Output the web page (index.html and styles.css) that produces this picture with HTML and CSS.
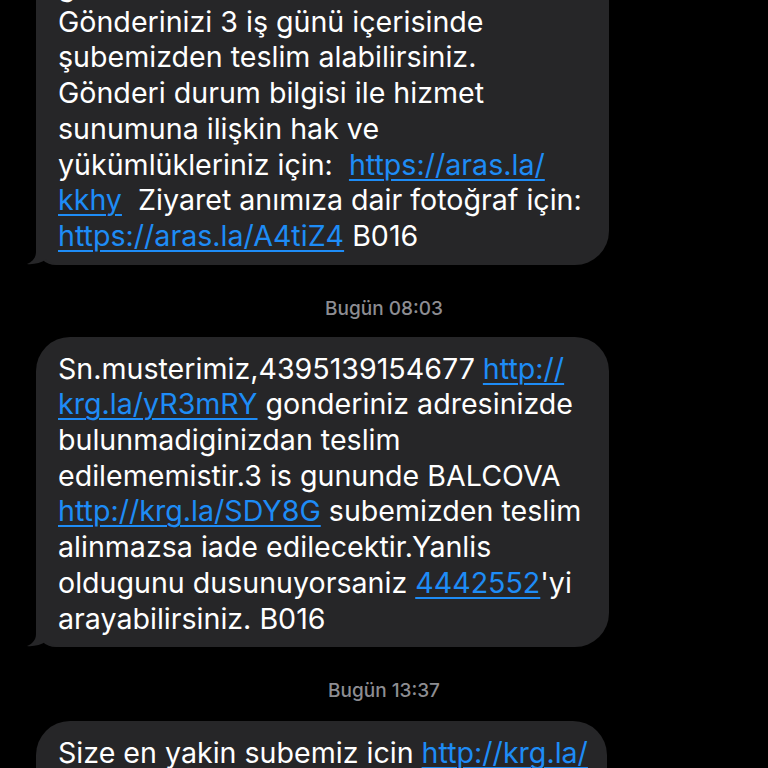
FILE: index.html
```html
<!DOCTYPE html>
<html lang="tr">
<head>
<meta charset="utf-8">
<link rel="stylesheet" href="styles.css">
</head>
<body>
<div class="thread">
  <div class="bubble b1">
    <svg class="tail" viewBox="0 0 49 22" width="49" height="22"><path d="M9,0 L9,9 C9,15 5,19 0,21 C6,21.8 14,20 19,16.5 C23,20 28,22 36,22 L49,22 L49,0 Z"/></svg>
    <p class="msg">gönderiniz adresinize teslim edilemedi.<br>Gönderinizi 3 iş günü içerisinde<br>şubemizden teslim alabilirsiniz.<br>Gönderi durum bilgisi ile hizmet<br>sunumuna ilişkin hak ve<br>yükümlükleriniz için:&nbsp; <a href="#">https://aras.la/<br>kkhy</a>&nbsp; Ziyaret anımıza dair fotoğraf için:<br><a href="#">https://aras.la/A4tiZ4</a> B016</p>
  </div>
  <div class="stamp s1">Bugün 08:03</div>
  <div class="bubble b2">
    <svg class="tail" viewBox="0 0 49 22" width="49" height="22"><path d="M9,0 L9,9 C9,15 5,19 0,21 C6,21.8 14,20 19,16.5 C23,20 28,22 36,22 L49,22 L49,0 Z"/></svg>
    <p class="msg">Sn.musterimiz,4395139154677 <a href="#">http://<br>krg.la/yR3mRY</a> gonderiniz adresinizde<br>bulunmadiginizdan teslim<br>edilememistir.3 is gununde BALCOVA<br><a href="#">http://krg.la/SDY8G</a> subemizden teslim<br>alinmazsa iade edilecektir.Yanlis<br>oldugunu dusunuyorsaniz <a href="#">4442552</a>'yi<br>arayabilirsiniz. B016</p>
  </div>
  <div class="stamp s2">Bugün 13:37</div>
  <div class="bubble b3">
    <p class="msg">Size en yakin subemiz icin <a href="#">http://krg.la/<br>aBcDeF</a></p>
  </div>
</div>
</body>
</html>
```

FILE: styles.css
```css
html, body {
  margin: 0;
  padding: 0;
  background: #000;
  height: 768px;
  overflow: hidden;
}
.thread {
  display: flex;
  flex-direction: column;
  align-items: flex-start;
  padding-left: 36px;
  margin-top: -46px;
}
.bubble {
  position: relative;
  box-sizing: border-box;
  width: 573px;
  background: #262628;
  border-radius: 34px 34px 34px 20px;
  padding: 14px 10px 11px 22px;
}
.b3 { width: 571px; }
.msg {
  position: relative;
  margin: 0;
  color: #fff;
  font-family: Inter, "Noto Sans", sans-serif;
  font-size: 28.6px;
  line-height: 35.7px;
  white-space: nowrap;
}
.msg a {
  color: #1e8cf6;
  text-decoration: underline;
  text-decoration-thickness: 2px;
  text-underline-offset: 4px;
}
.tail {
  position: absolute;
  left: -9px;
  bottom: 0;
  display: block;
}
.tail path { fill: #262628; }
.stamp {
  align-self: stretch;
  margin-left: -36px;
  text-align: center;
  color: #8d8d92;
  font-family: Inter, "Noto Sans", sans-serif;
  font-weight: 500;
  font-size: 19px;
  line-height: 20px;
}
.s1 { margin-top: 34px; margin-bottom: 18px; }
.s2 { margin-top: 34px; margin-bottom: 20px; }
```
